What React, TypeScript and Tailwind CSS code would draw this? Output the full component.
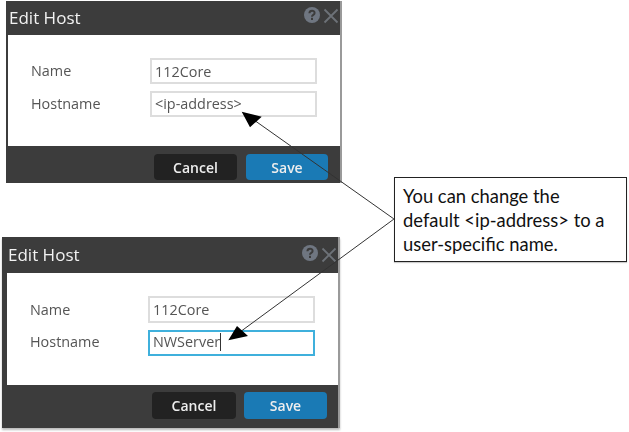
const Dialog = ({ focused }: { focused?: boolean }) => {
  const field = "w-[167px] border-2 flex items-center pl-[3px] text-[14.4px] text-[#555]";
  return (
    <div
      className={
        focused
          ? "w-[338px] h-[191px] ml-[2px] mt-[54px] flex flex-col bg-[#3c3c3c] border-r-2 border-[#9a9a9a] shadow-[0_2px_2px_#bbb] blur-[0.4px] font-['Open_Sans',sans-serif]"
          : "w-[336px] h-[182px] ml-[6px] flex flex-col bg-[#3c3c3c] border-r-2 border-[#9a9a9a] blur-[0.4px] font-['Open_Sans',sans-serif]"
      }
    >
      {/* header */}
      <div className={focused ? "h-[36px] shrink-0 flex items-center justify-between pl-[6px] pr-[1px]" : "h-[34px] shrink-0 flex items-center justify-between pl-[3px] pr-[1px]"}>
        <span className="text-[#f2f2f2] text-[17px]">Edit Host</span>
        <div className={focused ? "flex items-center gap-[3px] -mt-[4px]" : "flex items-center gap-[3px] -mt-[7px]"}>
          <svg width="16" height="16" viewBox="0 0 16 16">
            <circle cx="8" cy="8" r="8" fill="#6f7681" />
            <path d="M5.400 6.200c.2-3.200 5.200-3.200 5.200-.2 0 1.900-2.600 1.800-2.600 3.700" fill="none" stroke="#3c3c3c" strokeWidth="2" />
            <rect x="7" y="10.800" width="2" height="2.200" fill="#3c3c3c" />
          </svg>
          <svg className="mt-[3px]" width="16" height="16" viewBox="0 0 16 16">
            <path d="M1.500 1.500l13 13M14.500 1.500l-13 13" stroke="#6d7278" strokeWidth="1.800" />
          </svg>
        </div>
      </div>

      {/* body */}
      <div className={focused ? "ml-[5px] h-[112px] shrink-0 bg-white pt-[23px] pl-[23px] flex flex-col gap-[7px]" : "ml-[2px] h-[111px] shrink-0 bg-white pt-[23px] pl-[23px] flex flex-col gap-[7px]"}>
        <div className="flex items-center">
          <span className={focused ? "w-[118px] text-[14.4px] text-[#555]" : "w-[119px] text-[14.4px] text-[#555]"}>Name</span>
          <div className={focused ? `${field} h-[27px] border-[#ddd]` : `${field} h-[26px] pt-[2px] border-[#ddd]`}>112Core</div>
        </div>
        <div className="flex items-center">
          <span className={focused ? "w-[118px] pb-[3px] text-[14.4px] text-[#555]" : "w-[119px] text-[14.4px] text-[#555]"}>Hostname</span>
          <div className={focused ? `${field} h-[26px] pb-[2px] border-[#3fb0dc]` : `${field} h-[26px] border-[#ddd]`}>
            {focused ? "NWServer" : "<ip-address>"}
            {focused && <span className="w-px h-[18px] bg-[#333]" />}
          </div>
        </div>
      </div>

      {/* footer */}
      <div className={focused ? "flex justify-end gap-[8px] pt-[7px] pr-[11px]" : "flex justify-end gap-[9px] pt-[8px] pr-[12px]"}>
        <div className={focused ? "w-[84px] h-[27px] bg-[#222] rounded-sm flex items-center justify-center text-[14px] font-semibold text-[#eee]" : "w-[83px] h-[26px] bg-[#222] rounded-sm flex items-center justify-center text-[14px] font-semibold text-[#eee]"}>Cancel</div>
        <div className={focused ? "w-[83px] h-[27px] bg-[#1a7ab5] rounded-sm flex items-center justify-center text-[14px] font-semibold text-[#eee]" : "w-[82px] h-[26px] bg-[#1a7ab5] rounded-sm flex items-center justify-center text-[14px] font-semibold text-[#eee]"}>Save</div>
      </div>
    </div>
  );
};

export default function App() {
  return (
    <div className="relative w-[629px] h-[432px] bg-white overflow-hidden pt-px">
      <Dialog />
      <Dialog focused />
      {/* callout lines and arrow heads */}
      <svg className="absolute inset-0" width="629" height="432">
        <path d="M394 219L254 120M394 219L240 332" stroke="#333" strokeWidth="1" fill="none" />
        <path d="M241.700 111.700L261.700 116.700L250 127.300Z M228.300 340.300L237 326L248 336Z" fill="#000" />
      </svg>
      <div className="absolute left-[394px] top-[177px] w-[233px] h-[85px] bg-white border border-[#222] shadow-[0_1px_1px_#ccc] pl-[8px] pt-[6px] font-['Lato',sans-serif] text-[18.4px] leading-[24px] text-[#111]">
        You can change the<br />default &lt;ip-address&gt; to a<br />user-specific name.
      </div>
    </div>
  );
}
